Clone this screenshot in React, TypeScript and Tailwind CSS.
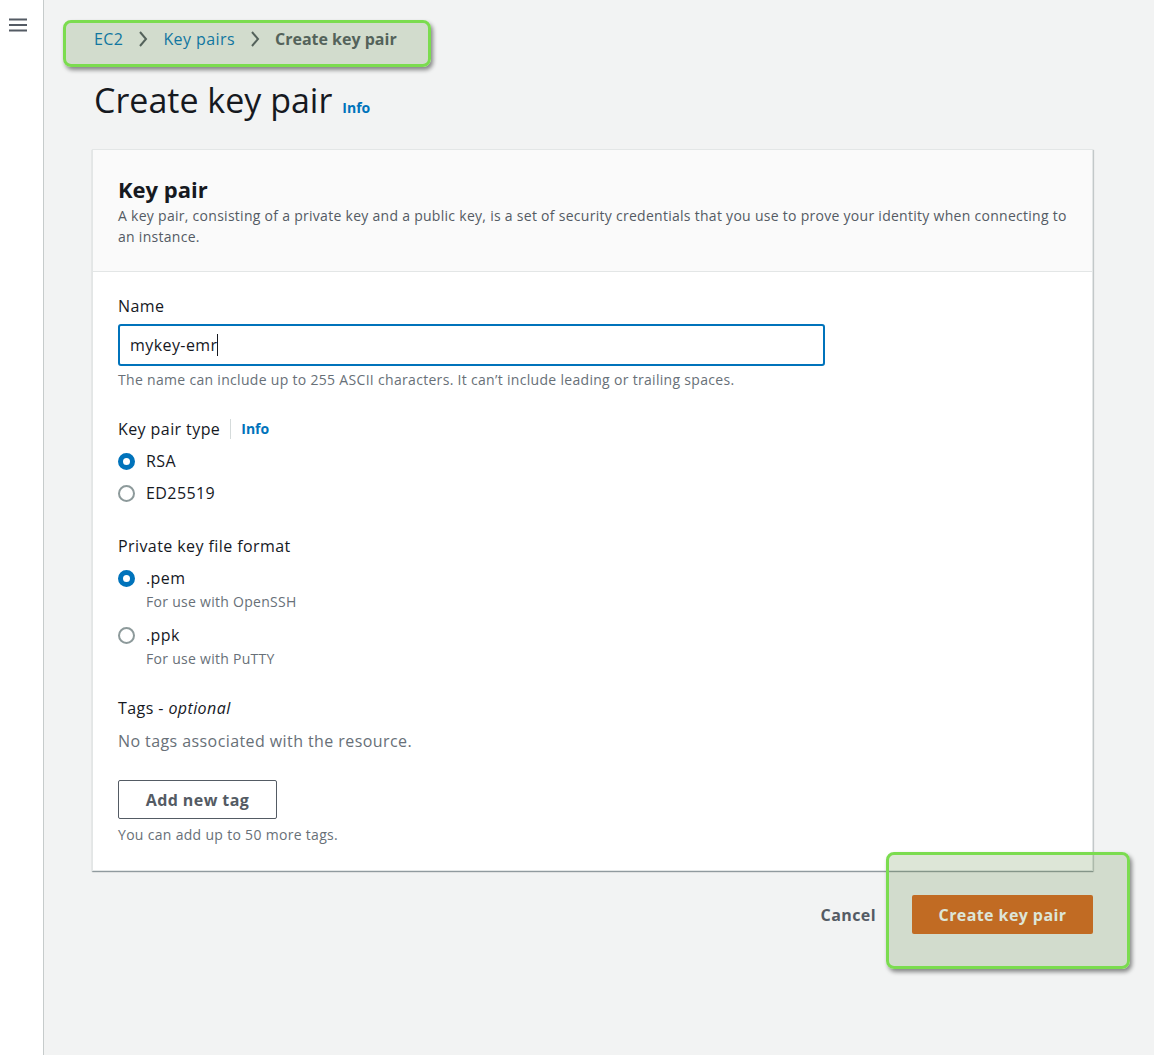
const Chevron = () => (
  <svg width="16" height="18" viewBox="0 0 16 18" className="mx-[12px]">
    <polyline points="5,2 11,9 5,16" fill="none" stroke="#545b64" strokeWidth="2" />
  </svg>
);

const Radio = ({ checked }: { checked: boolean }) =>
  checked ? (
    <span className="w-[17px] h-[17px] rounded-full border-[5px] border-[#0073bb] bg-white shrink-0" />
  ) : (
    <span className="w-[17px] h-[17px] rounded-full border-2 border-[#8d9a9b] bg-white shrink-0" />
  );

const Option = ({ checked, label, sub }: { checked: boolean; label: string; sub?: string }) => (
  <div>
    <div className="flex items-center gap-[11px] h-[22px]">
      <Radio checked={checked} />
      <span className="text-base text-[#16191f]">{label}</span>
    </div>
    {sub && <p className="pl-[28px] text-sm leading-5 tracking-[0.02em] text-[#687078] mt-[3px]">{sub}</p>}
  </div>
);

const App = () => {
  return (
    <div
      className="relative flex w-[1154px] h-[1055px] overflow-hidden bg-[#f2f3f3] tracking-[0.026em]"
      style={{ fontFamily: '"Open Sans", "Noto Sans", sans-serif' }}
    >
      {/* Sidebar */}
      <aside className="w-[44px] shrink-0 bg-white border-r border-[#c6cbcb] pt-[17px] pl-[9px]">
        <svg width="18" height="16" viewBox="0 0 18 16">
          <path d="M0 2.5h18M0 8h18M0 13.5h18" stroke="#545b64" strokeWidth="2" />
        </svg>
      </aside>

      {/* Main */}
      <main className="flex-1 pl-[48px] pr-[61px]">
        {/* Breadcrumb */}
        <nav className="flex items-center h-[22px] mt-[28px] pl-[2px] text-base">
          <a href="#" className="text-[#0073bb]">EC2</a>
          <Chevron />
          <a href="#" className="text-[#0073bb]">Key pairs</a>
          <Chevron />
          <span className="text-[#545b64] font-bold tracking-normal">Create key pair</span>
        </nav>

        {/* Title */}
        <div className="flex items-baseline gap-[10px] mt-[28px] pl-[2px]">
          <h1 className="text-[34px] leading-[44px] text-[#16191f] tracking-normal">Create key pair</h1>
          <a href="#" className="text-sm font-bold text-[#0073bb] tracking-normal">Info</a>
        </div>

        {/* Card */}
        <section className="mt-[27px] bg-white border border-[#e3e6e6] shadow-[0_1px_1px_rgba(0,28,36,0.3),1px_1px_1px_rgba(0,28,36,0.15)]">
          <div className="bg-[#fafafa] border-b border-[#e3e6e6] px-[25px] pt-[25px] pb-[24px]">
            <h2 className="text-[22px] leading-7 font-bold text-[#16191f] tracking-normal">Key pair</h2>
            <p className="text-sm leading-[21px] tracking-[0.02em] text-[#545b64] mt-[2px]">
              A key pair, consisting of a private key and a public key, is a set of security credentials that you use to prove your identity when connecting to an instance.
            </p>
          </div>

          <div className="px-[25px] pt-[23px] pb-[25px]">
            {/* Name */}
            <label className="block text-base leading-[22px] text-[#16191f]">Name</label>
            <div className="mt-[7px] w-[707px] h-[42px] border-2 border-[#0073bb] rounded-[3px] flex items-center pl-[10px]">
              <span className="text-base text-[#16191f]">mykey-emr</span>
              <span className="w-px h-[22px] bg-[#16191f]" />
            </div>
            <p className="mt-[4px] text-sm leading-5 tracking-[0.022em] text-[#687078]">
              The name can include up to 255 ASCII characters. It can’t include leading or trailing spaces.
            </p>

            {/* Key pair type */}
            <div className="mt-[28px] flex items-center h-[22px] text-base text-[#16191f]">
              <span>Key pair type</span>
              <span className="mx-[10px] w-px h-[20px] bg-[#d5dbdb]" />
              <a href="#" className="text-sm font-bold text-[#0073bb] tracking-normal">Info</a>
            </div>
            <div className="mt-[10px] flex flex-col gap-[10px]">
              <Option checked label="RSA" />
              <Option checked={false} label="ED25519" />
            </div>

            {/* Private key file format */}
            <p className="mt-[31px] text-base leading-[22px] text-[#16191f]">Private key file format</p>
            <div className="mt-[10px] flex flex-col gap-[12px]">
              <Option checked label=".pem" sub="For use with OpenSSH" />
              <Option checked={false} label=".ppk" sub="For use with PuTTY" />
            </div>

            {/* Tags */}
            <p className="mt-[28px] text-base leading-[22px] text-[#16191f]">
              Tags - <i>optional</i>
            </p>
            <p className="mt-[11px] text-base leading-[22px] text-[#687078]">No tags associated with the resource.</p>
            <button className="mt-[28px] w-[159px] h-[39px] border border-[#545b64] rounded-[2px] bg-white text-base font-bold text-[#545b64]">
              Add new tag
            </button>
            <p className="mt-[6px] text-sm leading-5 tracking-[0.022em] text-[#687078]">You can add up to 50 more tags.</p>
          </div>
        </section>

        {/* Actions */}
        <div className="mt-[24px] flex items-center justify-end gap-[36px]">
          <button className="text-base font-bold text-[#545b64]">Cancel</button>
          <button className="w-[181px] h-[39px] rounded-[2px] bg-[#dc661f] text-base font-bold text-white">
            Create key pair
          </button>
        </div>
      </main>

      {/* Highlight annotations */}
      <div className="absolute left-[63px] top-[20px] w-[368px] h-[47px] rounded-[8px] border-[3px] border-[#7bdc4f] bg-[rgba(87,128,53,0.2)] shadow-[2px_3px_4px_rgba(0,0,0,0.45)]" />
      <div className="absolute left-[886px] top-[852px] w-[244px] h-[117px] rounded-[8px] border-[3px] border-[#7bdc4f] bg-[rgba(87,128,53,0.2)] shadow-[2px_3px_4px_rgba(0,0,0,0.45)]" />
    </div>
  );
};

export default App;
